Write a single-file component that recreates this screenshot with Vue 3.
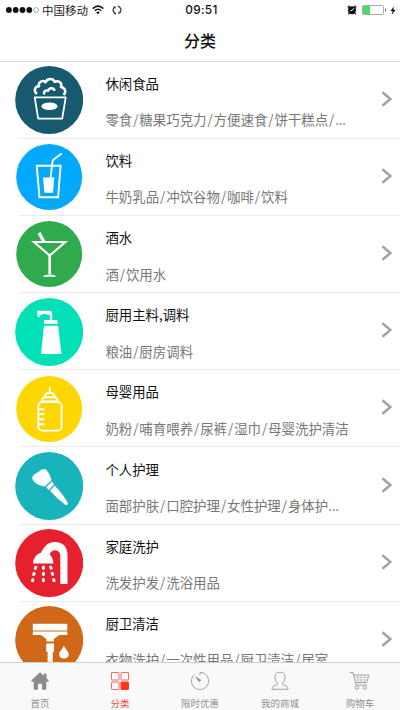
<script setup>
const rows = [
  { icon: 'snack', color: '#175a70', r: 34, title: '休闲食品', sub: '零食/糖果巧克力/方便速食/饼干糕点/...' },
  { icon: 'drink', color: '#03a9fc', r: 33, title: '饮料', sub: '牛奶乳品/冲饮谷物/咖啡/饮料' },
  { icon: 'wine', color: '#30aa4d', r: 33, title: '酒水', sub: '酒/饮用水' },
  { icon: 'sauce', color: '#02e0b8', r: 34, title: '厨用主料,调料', sub: '粮油/厨房调料' },
  { icon: 'baby', color: '#fed702', r: 33, title: '母婴用品', sub: '奶粉/哺育喂养/尿裤/湿巾/母婴洗护清洁' },
  { icon: 'brush', color: '#19b3bc', r: 34, title: '个人护理', sub: '面部护肤/口腔护理/女性护理/身体护...' },
  { icon: 'shower', color: '#e6202c', r: 34, title: '家庭洗护', sub: '洗发护发/洗浴用品' },
  { icon: 'clean', color: '#d16718', r: 34, title: '厨卫清洁', sub: '衣物洗护/一次性用品/厨卫清洁/居室' }
]
const tabs = [
  { icon: 'home', label: '首页' },
  { icon: 'grid', label: '分类', active: true },
  { icon: 'clock', label: '限时优惠' },
  { icon: 'user', label: '我的商城' },
  { icon: 'cart', label: '购物车' }
]
const parts = (s) => s.split(/([/]|\.\.\.)/).filter(Boolean)
</script>

<template>
  <div class="screen">
    <header class="header">
      <div class="status">
        <div class="left">
          <svg class="dots" width="34" height="8" viewBox="0 0 34 8">
            <circle v-for="n in 4" :key="n" :cx="n * 6.8 - 3.9" cy="4" r="2.9" fill="#111" />
            <circle cx="30.2" cy="4" r="2.4" fill="none" stroke="#888" stroke-width=".7" />
          </svg>
          <span class="carrier">中国移动</span>
          <svg class="wifi" width="12" height="10" viewBox="0 0 12 10" fill="none" stroke="#111" stroke-width="1.5">
            <path d="M.7 3.6Q6-1.3 11.3 3.6M2.7 5.7Q6 2.7 9.3 5.7" />
            <path d="M6 9.2L4.1 7.3Q6 5.9 7.9 7.3Z" fill="#111" stroke="none" />
          </svg>
          <svg class="sync" width="10" height="10" viewBox="0 0 10 10" fill="none" stroke="#333" stroke-width="1.2">
            <path d="M4.2 8.8A3.8 3.8 0 0 1 2.2 2.4M5.8 1.2A3.8 3.8 0 0 1 7.8 7.6" />
            <path d="M1 1.8L3.6 1.2L3.4 4ZM9 8.2L6.4 8.8L6.6 6Z" fill="#333" stroke="none" />
          </svg>
        </div>
        <span class="time">09:51</span>
        <div class="right">
          <svg width="10" height="10" viewBox="0 0 10 10">
            <circle cx="5" cy="5.3" r="4" fill="#111" />
            <path d="M.8 2.6L2.6.8M9.2 2.6L7.4.8M2.2 8.3L1.3 9.4M7.8 8.3L8.7 9.4" stroke="#111" stroke-width="1.3" />
            <path d="M6.7 3.2L5 5.6H3.2" fill="none" stroke="#fff" stroke-width=".9" />
          </svg>
          <svg class="battery" width="25" height="10" viewBox="0 0 25 10">
            <rect x=".5" y=".5" width="21" height="9" rx="1" fill="#fff" stroke="#999" stroke-width=".8" />
            <rect x="1" y="1" width="7.2" height="8" fill="#4cd964" />
            <path d="M23 3.3Q25 5 23 6.7Z" fill="#555" />
          </svg>
          <svg width="6" height="9" viewBox="0 0 6 9"><path d="M4 .5L.4 5H2.6L1.8 8.7L5.6 3.8H3.3Z" fill="#111" /></svg>
        </div>
      </div>
      <h1>分类</h1>
    </header>

    <main class="list">
      <section v-for="row in rows" :key="row.icon" class="row">
        <svg class="badge" width="68" height="68" viewBox="0 0 68 68">
          <circle cx="34.2" cy="34" :r="row.r" :fill="row.color" />
          <g v-if="row.icon === 'snack'" fill="none" stroke="#fff" stroke-width="1.8" stroke-linejoin="round">
            <path d="M19.7 31.4H50.7L47.2 52.6H23.2Z" />
            <path d="M21.8 28C18.5 25 19.5 20.4 24 20.2C22.8 16.2 27.5 13.6 30.5 16.2C32.2 11.8 38.6 12 39.5 15.8C43.5 14 47.6 17.1 46 21C50.5 22 51.5 26 48.6 29M29.6 28.3C28 25.5 30.5 23.7 33 24.8C34 21.2 39.2 21.4 39.5 24.8" stroke-width="2.5" />
            <ellipse cx="34.5" cy="40.3" rx="8" ry="3.8" fill="#fff" stroke="none" />
          </g>
          <g v-else-if="row.icon === 'drink'" fill="none" stroke="#fff" stroke-width="1.9">
            <path d="M21.7 22.8H45.6L43.1 54.3H24.5Z" />
            <path d="M35.5 35L37.7 17.2L46.7 10.4" />
            <path d="M28 34.5H39.3L38 49.7H29.4Z" fill="#fff" stroke="none" />
          </g>
          <g v-else-if="row.icon === 'wine'" fill="none" stroke="#fff" stroke-width="2.2">
            <path d="M19 22H50.2L34.7 35.5Z" />
            <path d="M34.7 35V54" stroke-width="2.7" />
            <path d="M24 12.7L29 22" stroke-width="3.2" />
            <path d="M27.8 56.8Q28.5 54.8 34.7 54.2Q40.8 54.8 41.2 56.8Z" fill="#fff" stroke="none" />
          </g>
          <g v-else-if="row.icon === 'sauce'" fill="#fff">
            <path d="M22 12.7H34.2Q37.2 12.8 37.2 15.5V22H42.5V26H28.9V22H34.9V17L29.4 16Q25.5 15.8 24.6 19.3L22.5 18.8Z" />
            <path d="M29 27.7H43.1L46.5 56H26Z" />
          </g>
          <g v-else-if="row.icon === 'baby'" fill="none" stroke="#fff" stroke-width="1.9" stroke-linejoin="round">
            <rect x="23.3" y="27" width="23.3" height="28.6" rx="4.2" />
            <path d="M26.7 26.4Q26.7 22.5 31 22.3H38.8Q42.8 22.5 42.8 26.4ZM29.6 22Q30 17.8 34.7 17.8Q39.2 17.8 39.8 22" />
            <path d="M34.7 17.8V12.3M23.3 34.3H29.5M23.3 39.3H29.5M23.3 44.3H29.5M23.3 49.3H29.5" />
          </g>
          <g v-else-if="row.icon === 'brush'" fill="#fff">
            <path d="M30.2 17Q26.5 16.6 23 20.3Q17.2 22.5 17.2 26.8Q20.3 33.2 29.8 34.6L36.4 28.3Q34.9 21 30.2 17Z" />
            <path d="M31 35.2L36.9 29.6L39 32.2L33.9 38ZM35 38.8L39.6 33.5Q48.3 42.3 53.1 51.5Q52.5 53.3 50.6 52.9Q42 47 35 38.8Z" />
          </g>
          <g v-else-if="row.icon === 'shower'" fill="#fff">
            <path d="M18 34.4Q18.5 25.9 25.9 23.8C29.2 17 33.5 13 39.6 13Q52.5 13.2 52.5 27V54.9H45.3V27.5Q45.3 21.4 40.2 21.2Q36.5 21.2 34.6 25.2Q38.1 28.5 38.4 34.4Z" />
            <g stroke="#fff" stroke-width="3" stroke-linecap="round">
              <path d="M20.8 38.3L20.3 39.4M19.1 44.4L18.7 45.5M17.8 50.7L17.5 51.7M28.4 38.1V39.2M28.4 44.3V45.4M28.4 50.6V51.7M35.6 38.1L36.2 39.2M37.2 44.3L37.7 45.4M38.6 50.6L39.1 51.7" />
            </g>
          </g>
          <g v-else fill="#fff">
            <path d="M17.8 17.7H52.3V24.6H17.8ZM17.8 25.6H52.3V29.1H44.5L38.7 33V35.5H31.4V33L25.8 29.1H17.8Z" />
            <path d="M31.2 37.5H39V45.8H37.7V68H32.6V45.8H31.2Z" />
            <path d="M48.9 39.6C47.4 43.7 44.2 45.5 44.2 48.2C44.2 54 53.7 54 53.7 48.2C53.7 45.5 50.4 43.7 48.9 39.6Z" />
          </g>
        </svg>
        <div class="text">
          <h2>{{ row.title }}</h2>
          <p><span v-for="(p, i) in parts(row.sub)" :key="i" :class="{ slash: p === '/', more: p === '...' }">{{ p }}</span></p>
        </div>
        <svg class="chevron" width="11" height="16" viewBox="0 0 11 16" fill="none" stroke="#a3a3a3" stroke-width="2.5">
          <path d="M1.4 1.2L9.4 8L1.4 14.8" />
        </svg>
      </section>
    </main>

    <nav class="tabs">
      <div v-for="tab in tabs" :key="tab.icon" class="tab" :class="{ active: tab.active }">
        <svg width="20" height="20" viewBox="0 0 20 20" fill="none" stroke="#a2a2a2" stroke-width="1">
          <path v-if="tab.icon === 'home'" d="M10 1.2L1 9.8L2 10.7H3.7V18.8H8V12.7H12V18.8H16.3V10.7H18L19 9.8L16.5 7.3V2.5H13.8V4.8Z" fill="#8b8b8b" stroke="none" />
          <g v-else-if="tab.icon === 'grid'" stroke="#ee6b60">
            <rect x="1.5" y="1.5" width="7.5" height="7.5" rx=".6" />
            <rect x="11" y="1.5" width="7.5" height="7.5" rx=".6" />
            <rect x="1.5" y="11" width="7.5" height="7.5" rx=".6" />
            <rect x="11" y="11" width="7.5" height="7.5" rx=".6" fill="#fd3523" stroke="#fd3523" />
          </g>
          <g v-else-if="tab.icon === 'clock'">
            <path d="M10 4V1.4A8.6 8.6 0 1 1 4.2 3.7" />
            <path d="M5.8 5.8L10.8 9.2L9.2 10.8Z" fill="#999" stroke="#999" />
          </g>
          <path v-else-if="tab.icon === 'user'" d="M7.7 12.4C5.8 10.7 5 8.6 5 6.2C5 2.9 6.9 1.2 10 1.2C13.1 1.2 15 2.9 15 6.2C15 8.6 14.2 10.7 12.3 12.4V13.4C15.4 14.4 17.9 15.2 18.1 18.3H1.9C2.1 15.2 4.6 14.4 7.7 13.4Z" />
          <g v-else>
            <path d="M0 1.5H3L6 14H17M3.7 4H19L16.6 11.5H5.5" />
            <path d="M5 6.5H18M5.4 9H17.4M7.4 4L8.3 11.5M11.1 4V11.5M15 4L14.4 11.5" stroke-width=".5" />
            <circle cx="7" cy="16.7" r="1.7" />
            <circle cx="14.8" cy="16.7" r="1.7" />
          </g>
        </svg>
        <span>{{ tab.label }}</span>
      </div>
    </nav>
  </div>
</template>

<style>
body { margin: 0; background: #fff; }
</style>

<style scoped>
.screen {
  width: 400px;
  height: 710px;
  display: flex;
  flex-direction: column;
  overflow: hidden;
  background: #fff;
  font-family: "Noto Sans CJK SC", sans-serif;
}
h1, h2, p { margin: 0; }
.header {
  flex: none;
  box-sizing: border-box;
  height: 61.5px;
  border-bottom: 1px solid #dedede;
}
.status {
  height: 20px;
  padding: 0 4px 0 6px;
  display: grid;
  grid-template-columns: 1fr auto 1fr;
  align-items: center;
}
.left, .right { display: flex; align-items: center; }
.carrier { margin-left: 2px; font-size: 11.5px; line-height: 20px; color: #222; }
.wifi { margin-left: 4px; }
.sync { margin-left: 8px; }
.time { margin-left: 1px; font: 500 11.8px/20px Inter, sans-serif; color: #111; letter-spacing: .3px; }
.right { justify-content: flex-end; }
.battery { margin: 0 3px 0 5px; }
h1 { text-align: center; font-size: 16px; line-height: 41px; font-weight: 500; color: #111; }
.list { flex: 1; min-height: 0; overflow: hidden; }
.row {
  height: 77.2px;
  padding: 0 8px 0 15px;
  display: flex;
  align-items: center;
  background: linear-gradient(#ececec, #ececec) 19px 100% / 381px 1px no-repeat;
}
.badge { flex: none; }
.text { flex: 1; margin-left: 22.4px; padding-top: 1.6px; white-space: nowrap; }
h2 { font-size: 13.4px; line-height: 20px; font-weight: 400; color: #111; }
p { margin-top: 16.5px; font-size: 13.45px; line-height: 20px; font-weight: 400; color: #787878; }
.slash { padding: 0 .9px; }
.more { letter-spacing: -.2px; }
.chevron { flex: none; margin-bottom: 3px; }
.tabs {
  flex: none;
  box-sizing: border-box;
  height: 48px;
  border-top: 1px solid #cfcfcf;
  background: #f9f9f9;
  display: grid;
  grid-template-columns: repeat(5, 1fr);
}
.tab {
  padding-top: 8px;
  display: flex;
  flex-direction: column;
  align-items: center;
  font-size: 9.5px;
  line-height: 14px;
  color: #929292;
}
.tab span { margin-top: 5px; }
.active { color: #f8483a; }
</style>
